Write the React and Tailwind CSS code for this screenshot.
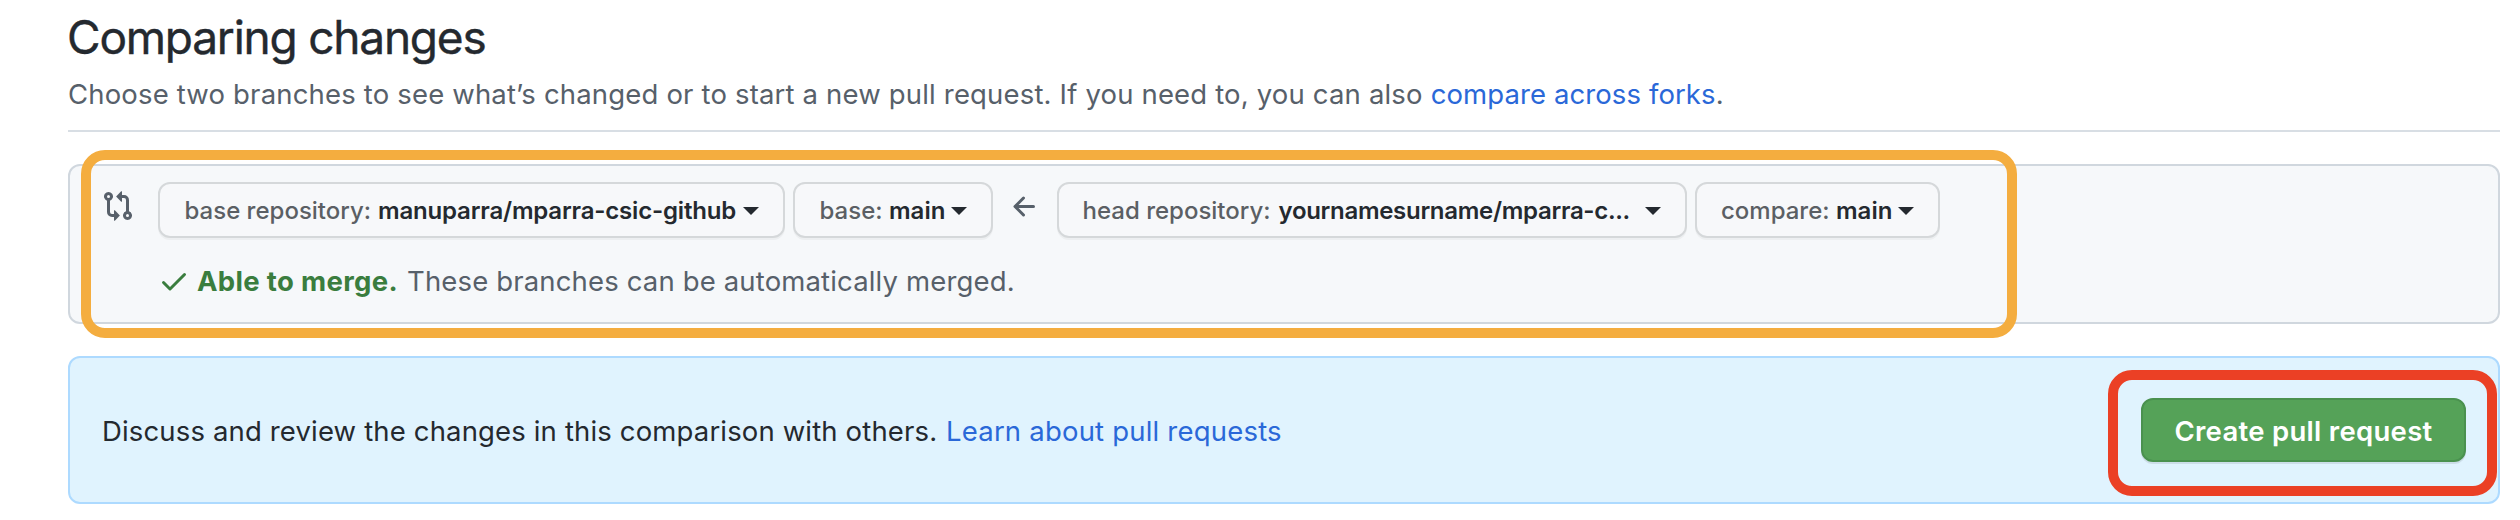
function GitCompareIcon() {
  return (
    <svg className="h-8 w-8 shrink-0 fill-[#57606a]" viewBox="0 0 16 16">
      <path fillRule="evenodd" d="M9.573.677L7.177 3.073a.25.25 0 000 .354l2.396 2.396A.25.25 0 0010 5.646V4h1a1 1 0 011 1v5.628a2.251 2.251 0 101.5 0V5A2.5 2.5 0 0011 2.5h-1V.854a.25.25 0 00-.427-.177zM6 12v-1.646a.25.25 0 01.427-.177l2.396 2.396a.25.25 0 010 .354l-2.396 2.396A.25.25 0 016 15.146V13.5H5A2.5 2.5 0 012.5 11V5.372a2.25 2.25 0 111.5 0V11a1 1 0 001 1h1zm6.75 0a.75.75 0 100 1.5.75.75 0 000-1.5zM4 3.25a.75.75 0 11-1.5 0 .75.75 0 011.5 0z" />
    </svg>
  );
}

function ArrowLeftIcon() {
  return (
    <svg className="h-8 w-8 shrink-0 fill-[#57606a]" viewBox="0 0 16 16">
      <path fillRule="evenodd" d="M7.78 12.53a.75.75 0 01-1.06 0L2.47 8.28a.75.75 0 010-1.06l4.25-4.25a.75.75 0 011.06 1.06L4.81 7h7.44a.75.75 0 010 1.5H4.81l2.97 2.97a.75.75 0 010 1.06z" />
    </svg>
  );
}

function CheckIcon() {
  return (
    <svg className="h-8 w-8 shrink-0 fill-[#3a7d3e]" viewBox="0 0 16 16">
      <path fillRule="evenodd" d="M13.78 4.22a.75.75 0 010 1.06l-7.25 7.25a.75.75 0 01-1.06 0L2.22 9.28a.75.75 0 011.06-1.06L6 10.94l6.72-6.72a.75.75 0 011.06 0z" />
    </svg>
  );
}

function Picker({ label, value, className, labelClass, valueClass }) {
  return (
    <button
      className={`flex h-14 shrink-0 items-center rounded-xl border-2 border-[#d5d8da] bg-[#f7f8fa] pr-6 pt-0.5 text-2xl font-semibold text-[#24292f] shadow-[0_2px_0_rgba(27,31,36,0.04)] ${className}`}
    >
      <span className={`shrink-0 whitespace-nowrap text-left font-medium text-[#5b5f64] ${labelClass}`}>{label}</span>
      <span className={`whitespace-nowrap ${valueClass}`}>{value}</span>
      <span className="ml-auto h-0 w-0 border-x-8 border-t-8 border-x-transparent border-t-[#24292f]" />
    </button>
  );
}

export default function App() {
  return (
    <div className="h-[520px] w-[2520px] overflow-hidden bg-white pl-[68px] pr-5 font-['Inter',sans-serif] text-[27.5px] text-[#24292f]">
      <header className="h-[132px] border-b-2 border-[#d8dee4]">
        <h1 className="-ml-px pt-[7px] text-[46px] leading-[60px] tracking-[-1.22px] [-webkit-text-stroke:0.4px_#24292f]">Comparing changes</h1>
        <p className="whitespace-pre pt-[6px] leading-[42px] tracking-[0.17px] text-[#57606a]">
          Choose two branches to see what’s changed or to start a new pull request. If you need to, you can also{" "}
          <a className="tracking-[0.1px] text-[#2a68d8]">compare across forks</a>.
        </p>
      </header>

      <section className="relative mt-8 h-40 rounded-xl border-2 border-[#d0d7de] bg-[#f6f8fa] pl-8 pt-4">
        <div className="flex">
          <div className="w-14 pt-2"><GitCompareIcon /></div>
          <Picker label="base repository:" value="manuparra/mparra-csic-github" className="w-[627px] pl-[24.5px]" labelClass="w-[193.5px]" valueClass="tracking-[-0.18px]" />
          <Picker label="base:" value="main" className="ml-2 w-[200px] pl-[24.5px]" labelClass="w-[69.5px]" valueClass="" />
          <div className="flex w-16 pl-4 pt-[9px]"><ArrowLeftIcon /></div>
          <Picker label="head repository:" value="yournamesurname/mparra-c..." className="w-[630px] pl-[23.5px]" labelClass="w-[196px]" valueClass="tracking-[-0.3px]" />
          <Picker label="compare:" value="main" className="ml-2 w-[245px] pl-[24px]" labelClass="w-[115px]" valueClass="" />
        </div>
        <div className="mt-[22px] flex h-[42px] items-center whitespace-nowrap pl-[56px] leading-[42px]">
          <CheckIcon />
          <strong className="ml-[7px] w-[210px] font-bold tracking-[0.33px] text-[#3a7d3e]">Able to merge.</strong>
          <span className="tracking-[0.15px] text-[#57606a]">These branches can be automatically merged.</span>
        </div>
        <div className="pointer-events-none absolute left-[11px] top-[-16px] h-[188px] w-[1936px] rounded-[24px] border-[10px] border-[#f4ad3f]" />
      </section>

      <section className="relative mt-8 flex h-[148px] items-center rounded-xl border-2 border-[#addaff] bg-[#e0f3fe] pl-8 pr-8">
        <p className="flex whitespace-nowrap pt-[3px]">
          <span className="w-[844px] tracking-[0.15px]">Discuss and review the changes in this comparison with others.</span>
          <a className="tracking-[0.2px] text-[#2a68d8]">Learn about pull requests</a>
        </p>
        <button className="ml-auto h-16 w-[325px] rounded-xl border-2 border-[#4a914f] bg-[#55a258] pt-[3px] font-semibold tracking-[0.3px] text-white shadow-[0_2px_0_rgba(27,31,36,0.1)]">Create pull request</button>
        <div className="pointer-events-none absolute right-[1px] top-3 h-[126px] w-[389px] rounded-[24px] border-[10px] border-[#eb4025]" />
      </section>
    </div>
  );
}
